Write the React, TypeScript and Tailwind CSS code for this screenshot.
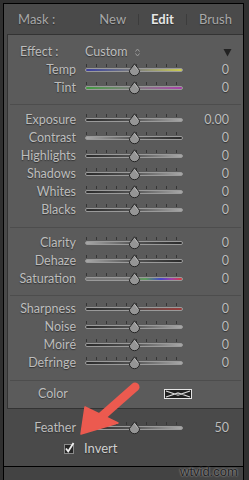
import React from 'react'

type Row = { label: string; value?: string; track: string }

const darkLight = 'bg-linear-to-r from-[#2a2a2a] via-[#555555] to-[#a8a8a8]'
const lightDark = 'bg-linear-to-r from-[#a8a8a8] via-[#555555] to-[#2a2a2a]'

const groups: Row[][] = [
    [
        {label: 'Temp', track: 'bg-linear-to-r from-[#3c3c9c] via-[#7c7c7c] to-[#cccc4a]'},
        {label: 'Tint', track: 'bg-linear-to-r from-[#3d9a3d] via-[#7c7c7c] to-[#a83ca8]'},
    ],
    [
        {label: 'Exposure', value: '0.00', track: darkLight},
        {label: 'Contrast', track: lightDark},
        {label: 'Highlights', track: darkLight},
        {label: 'Shadows', track: darkLight},
        {label: 'Whites', track: darkLight},
        {label: 'Blacks', track: darkLight},
    ],
    [
        {label: 'Clarity', track: lightDark},
        {label: 'Dehaze', track: lightDark},
        {
            label: 'Saturation',
            track: 'bg-[linear-gradient(to_right,#777777_0%,#7a7a7a_45%,#5c9c5c_62%,#4646c8_78%,#a040a8_89%,#d83c3c_100%)]'
        },
    ],
    [
        {label: 'Sharpness', track: 'bg-linear-to-r from-[#2a2a2a] via-[#4a4a4a] to-[#9a3a3a]'},
        {label: 'Noise', track: darkLight},
        {label: 'Moiré', track: darkLight},
        {label: 'Defringe', track: darkLight},
    ],
]

const Slider: React.FC<{ track: string }> = ({track}) => {
    return (
        <div className="relative w-[98px] h-[18px] flex flex-col">
            <div className="mt-[3px] ml-[1px] w-[91px] h-[3px] flex justify-between">
                {Array.from({length: 10}).map((_, i) => (
                    <span key={i} className="w-px h-[3px] bg-[#363636]"/>
                ))}
            </div>
            <div className={`mt-[1px] h-[4px] rounded-full border border-[#9a9a9a] ${track}`}/>
            <svg className="absolute left-[43px] top-[2px]" width="13" height="14" viewBox="0 0 13 14">
                <path d="M6.5 0.8 L11.6 7.6 A5.1 5.1 0 0 1 1.4 7.6 Z" fill="#959595" stroke="#262626" strokeWidth="1"/>
                <path d="M6.5 2.4 L9.8 6.8" stroke="#bdbdbd" strokeWidth="0.9"/>
            </svg>
        </div>
    )
}

const SliderRow: React.FC<{ row: Row }> = ({row}) => {
    return (
        <div className="h-[18px] flex items-center">
            <span className="w-[68px] text-right text-[#bdbdbd] [text-shadow:0_1px_1px_#333333]">{row.label}</span>
            <div className="ml-[9px]">
                <Slider track={row.track}/>
            </div>
            <span className="w-[46px] text-right text-[#bdbdbd] [text-shadow:0_1px_1px_#333333]">{row.value ?? '0'}</span>
        </div>
    )
}

const Divider = () => <div className="mx-[2px] h-px bg-[#4d4d4d]"/>

export default function App() {
    return (
        <div className="relative w-[249px] h-[480px] bg-[#303030] pt-[3px] pl-[3px] overflow-hidden font-['Lato',sans-serif] text-[12.5px] leading-none">
            <div className="w-[241px] h-[477px] border-x border-t border-black bg-[#4a4a4a] flex flex-col">
                {/* header */}
                <div className="h-[30px] flex items-center pl-[14px] pr-[11px] text-[13px] text-[#a8a8a8] [text-shadow:0_1px_1px_#2e2e2e]">
                    <span>Mask :</span>
                    <div className="flex-1"/>
                    <div className="flex items-center gap-[12px]">
                        <span>New</span>
                        <span className="w-px h-[11px] bg-[#3c3c3c]"/>
                        <span className="text-[#e6e6e6] font-bold">Edit</span>
                        <span className="w-px h-[11px] bg-[#3c3c3c]"/>
                        <span>Brush</span>
                    </div>
                </div>

                {/* main panel */}
                <div className="ml-[3px] border-t border-l border-b border-[#333333] bg-[#5b5b5b]">
                    <div className="pt-[8px] pb-[7px]">
                        <div className="h-[18px] flex items-center text-[#bdbdbd] [text-shadow:0_1px_1px_#333333]">
                            <span className="w-[77px] pl-[12px]">Effect :</span>
                            <span>Custom</span>
                            <svg className="ml-[8px]" width="5" height="9" viewBox="0 0 5 9">
                                <path d="M0.5 3.5 L2.5 1 L4.5 3.5 M0.5 5.5 L2.5 8 L4.5 5.5" stroke="#9c9c9c" strokeWidth="1" fill="none"/>
                            </svg>
                            <div className="flex-1"/>
                            <svg className="mr-[11px]" width="9" height="9" viewBox="0 0 9 9">
                                <path d="M0.5 1 L8.5 1 L4.5 8.5 Z" fill="#222222"/>
                            </svg>
                        </div>
                        {groups[0].map((r) => <SliderRow key={r.label} row={r}/>)}
                    </div>
                    <Divider/>
                    <div className="pt-[6px] pb-[8px]">
                        {groups[1].map((r) => <SliderRow key={r.label} row={r}/>)}
                    </div>
                    <Divider/>
                    <div className="pt-[6px] pb-[7px]">
                        {groups[2].map((r) => <SliderRow key={r.label} row={r}/>)}
                    </div>
                    <Divider/>
                    <div className="pt-[4px] pb-[8px]">
                        {groups[3].map((r) => <SliderRow key={r.label} row={r}/>)}
                    </div>
                    <Divider/>
                    <div className="pt-[4px] pb-[5px]">
                        <div className="h-[18px] flex items-center">
                            <span className="pl-[30px] text-[#bdbdbd] [text-shadow:0_1px_1px_#333333]">Color</span>
                            <div className="flex-1"/>
                            <svg className="mr-[51px]" width="28" height="10" viewBox="0 0 28 10">
                                <rect x="0.5" y="0.5" width="27" height="9" fill="#1e1e1e" stroke="#e4e4e4"/>
                                <path d="M2 2 L14 6 L26 2 M2 8 L14 4 L26 8" stroke="#d8d8d8" strokeWidth="1.2" fill="none"/>
                            </svg>
                        </div>
                    </div>
                </div>

                {/* feather / invert */}
                <div className="pl-[4px] pt-[10px] pb-[9px] border-b border-black flex flex-col gap-[2px]">
                    <SliderRow row={{label: 'Feather', value: '50', track: darkLight}}/>
                    <div className="h-[18px] flex items-center">
                        <div className="w-[68px] flex justify-end pr-[1px]">
                            <svg width="11" height="12" viewBox="0 0 11 12">
                                <rect x="0.5" y="2.5" width="9" height="9" fill="#262626" stroke="#8a8a8a"/>
                                <path d="M2 6.5 L4.2 9.5 L9.5 1" stroke="#f0f0f0" strokeWidth="1.8" fill="none"/>
                            </svg>
                        </div>
                        <span className="ml-[8px] text-[13px] text-[#d0d0d0] [text-shadow:0_1px_1px_#2e2e2e]">Invert</span>
                    </div>
                </div>
                <div className="flex-1 bg-[#434343]"/>
            </div>

            {/* annotation arrow */}
            <svg className="absolute left-0 top-0 pointer-events-none" width="249" height="480" viewBox="0 0 249 480">
                <line x1="101" y1="417" x2="135" y2="387" stroke="#ec5a4f" strokeWidth="9" strokeLinecap="round"/>
                <path d="M81 434 L85 407 L118 423 Z" fill="#ec5a4f" stroke="#ec5a4f" strokeWidth="1.5" strokeLinejoin="round"/>
            </svg>

            {/* watermark */}
            <span className="absolute left-[180px] top-[465px] text-[13px] font-['Liberation_Sans',sans-serif] text-[#222222] [text-shadow:0_0_2px_#c8c8c8]">wtvid.com</span>
        </div>
    )
}
